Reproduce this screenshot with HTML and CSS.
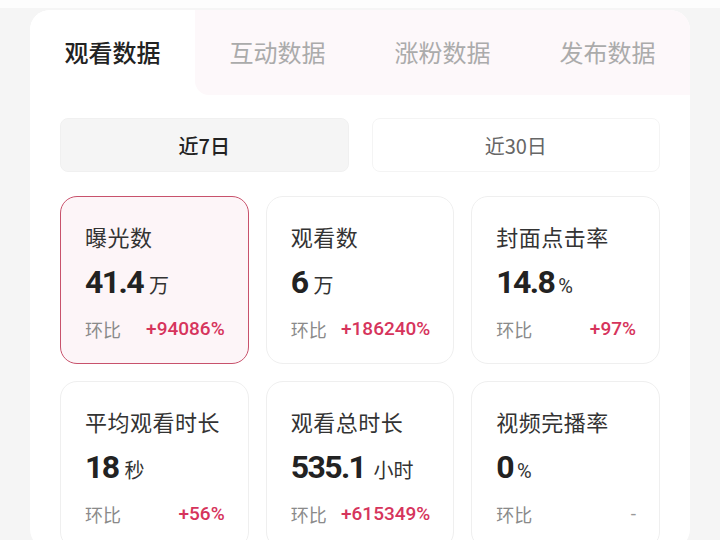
FILE: index.html
```html
<!DOCTYPE html>
<html lang="zh-CN">
<head>
<meta charset="utf-8">
<title>观看数据</title>
<link rel="stylesheet" href="styles.css">
</head>
<body>
<div class="topbar"></div>
<main class="panel">
  <nav class="tabs">
    <div class="tab active">观看数据</div>
    <div class="tab-rest">
      <div class="tab">互动数据</div>
      <div class="tab">涨粉数据</div>
      <div class="tab">发布数据</div>
    </div>
  </nav>
  <section class="content">
    <div class="periods">
      <div class="period active">近7日</div>
      <div class="period">近30日</div>
    </div>
    <div class="grid">
      <div class="card selected">
        <div class="label">曝光数</div>
        <div class="value"><span class="num">41.4</span><span class="unit">万</span></div>
        <div class="compare"><span class="cmp-label">环比</span><span class="cmp-val">+94086%</span></div>
      </div>
      <div class="card">
        <div class="label">观看数</div>
        <div class="value"><span class="num">6</span><span class="unit">万</span></div>
        <div class="compare"><span class="cmp-label">环比</span><span class="cmp-val">+186240%</span></div>
      </div>
      <div class="card">
        <div class="label">封面点击率</div>
        <div class="value"><span class="num">14.8</span><span class="unit pct">%</span></div>
        <div class="compare"><span class="cmp-label">环比</span><span class="cmp-val">+97%</span></div>
      </div>
      <div class="card">
        <div class="label">平均观看时长</div>
        <div class="value"><span class="num">18</span><span class="unit">秒</span></div>
        <div class="compare"><span class="cmp-label">环比</span><span class="cmp-val">+56%</span></div>
      </div>
      <div class="card">
        <div class="label">观看总时长</div>
        <div class="value"><span class="num">535.1</span><span class="unit wide">小时</span></div>
        <div class="compare"><span class="cmp-label">环比</span><span class="cmp-val">+615349%</span></div>
      </div>
      <div class="card">
        <div class="label">视频完播率</div>
        <div class="value"><span class="num">0</span><span class="unit pct">%</span></div>
        <div class="compare"><span class="cmp-label">环比</span><span class="cmp-val none">-</span></div>
      </div>
    </div>
  </section>
</main>
</body>
</html>
```

FILE: styles.css
```css
* { box-sizing: border-box; }
html, body { margin: 0; padding: 0; }
body {
  background: #f5f5f5;
  font-family: Roboto, "Noto Sans CJK SC", "Noto Sans", sans-serif;
  overflow: hidden;
  height: 540px;
}
.topbar { height: 8px; background: #fdfdfd; }
.panel {
  margin: 2px 30px 0;
  width: 660px;
  background: #fff;
  border-radius: 20px;
  overflow: hidden;
}
.tabs {
  display: flex;
  height: 85px;
}
.tab {
  width: 165px;
  display: flex;
  align-items: center;
  justify-content: center;
  padding-bottom: 3px;
  font-family: "Noto Sans CJK SC", sans-serif;
  font-size: 24px;
  color: #ababab;
}
.tab.active {
  color: #222;
  font-weight: 500;
  background: #fff;
}
.tab-rest {
  flex: 1;
  display: flex;
  background: #fdf8fa;
  border-bottom-left-radius: 14px;
}
.content { padding: 23px 30px 0; }
.periods {
  display: flex;
  gap: 23px;
}
.period {
  flex: 1;
  height: 54px;
  border-radius: 8px;
  display: flex;
  align-items: center;
  justify-content: center;
  font-size: 20px;
  color: #666;
  border: 1px solid #f4f4f4;
  background: #fff;
  font-family: "Noto Sans CJK SC", sans-serif;
}
.period.active {
  background: #f5f5f5;
  border-color: #f0f0f0;
  color: #222;
  font-weight: 500;
}
.grid {
  margin-top: 24px;
  display: grid;
  grid-template-columns: repeat(3, 1fr);
  gap: 17px 17px;
}
.card {
  height: 168px;
  border: 1px solid #efefef;
  border-radius: 17px;
  background: #fff;
  padding: 24px 23px 0 24px;
}
.card.selected {
  background: #fdf5f8;
  border: 1.5px solid #c8526c;
}
.label {
  font-family: "Noto Sans CJK SC", sans-serif;
  font-size: 22px;
  line-height: 30px;
  color: #333;
  letter-spacing: 0.5px;
}
.value {
  margin-top: 11px;
  height: 40px;
  line-height: 40px;
  display: flex;
  align-items: baseline;
  white-space: nowrap;
}
.num {
  font-family: Roboto, sans-serif;
  font-weight: 700;
  font-size: 32px;
  color: #222;
  letter-spacing: -1.6px;
}
.unit {
  margin-left: 6px;
  font-family: "Noto Sans CJK SC", sans-serif;
  font-size: 20px;
  color: #333;
}
.unit.pct {
  font-family: Roboto, sans-serif;
  margin-left: 4px;
}
.unit.wide { margin-left: 8px; }
.compare {
  margin-top: 15px;
  display: flex;
  justify-content: space-between;
  align-items: center;
  line-height: 24px;
  white-space: nowrap;
}
.cmp-label {
  font-family: "Noto Sans CJK SC", sans-serif;
  font-size: 18px;
  color: #8a8a8a;
}
.cmp-val {
  font-family: Roboto, sans-serif;
  font-weight: 500;
  font-size: 19px;
  color: #d6345c;
}
.cmp-val.none { color: #999; font-weight: 400; }
```
